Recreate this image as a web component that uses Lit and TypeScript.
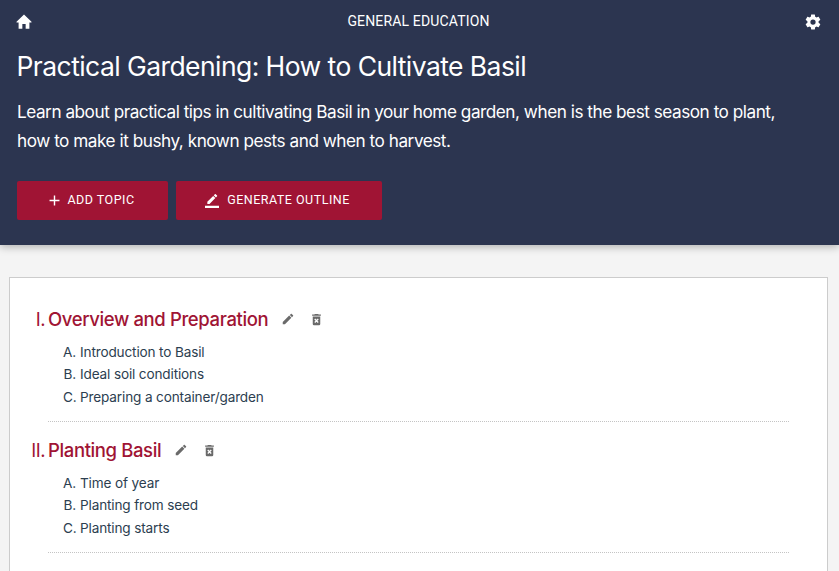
import { LitElement, html, css, svg } from "lit";
import { customElement } from "lit/decorators.js";

const ICONS = {
  home: "M2 11.8 12 2l10 9.8v.9h-2.8V21h-5v-6.2H9.8V21h-5v-8.3H2z",
  cog: "M12,15.5A3.5,3.5 0 0,1 8.5,12A3.5,3.5 0 0,1 12,8.5A3.5,3.5 0 0,1 15.5,12A3.5,3.5 0 0,1 12,15.5M19.43,12.97C19.47,12.65 19.5,12.33 19.5,12C19.5,11.67 19.47,11.34 19.43,11L21.54,9.37C21.73,9.22 21.78,8.95 21.66,8.73L19.66,5.27C19.54,5.05 19.27,4.96 19.05,5.05L16.56,6.05C16.04,5.66 15.5,5.32 14.87,5.07L14.5,2.42C14.46,2.18 14.25,2 14,2H10C9.75,2 9.54,2.18 9.5,2.42L9.13,5.07C8.5,5.32 7.96,5.66 7.44,6.05L4.95,5.05C4.73,4.96 4.46,5.05 4.34,5.27L2.34,8.73C2.21,8.95 2.27,9.22 2.46,9.37L4.57,11C4.53,11.34 4.5,11.67 4.5,12C4.5,12.33 4.53,12.65 4.57,12.97L2.46,14.63C2.27,14.78 2.21,15.05 2.34,15.27L4.34,18.73C4.46,18.95 4.73,19.03 4.95,18.95L7.44,17.94C7.96,18.34 8.5,18.68 9.13,18.93L9.5,21.58C9.54,21.82 9.75,22 10,22H14C14.25,22 14.46,21.82 14.5,21.58L14.87,18.93C15.5,18.67 16.04,18.34 16.56,17.94L19.05,18.95C19.27,19.03 19.54,18.95 19.66,18.73L21.66,15.27C21.78,15.05 21.73,14.78 21.54,14.63L19.43,12.97Z",
  plus: "M19,13H13V19H11V13H5V11H11V5H13V11H19V13Z",
  outline: "M20.71,4.04C21.1,3.65 21.1,3 20.71,2.63L18.37,0.29C18,-0.1 17.35,-0.1 16.96,0.29L15,2.25L18.75,6M17.75,7L14,3.25L4,13.25V17H7.75L17.75,7ZM0 20h24v4H0z",
  pencil: "M20.71,7.04C21.1,6.65 21.1,6 20.71,5.63L18.37,3.29C18,2.9 17.35,2.9 16.96,3.29L15.12,5.12L18.87,8.87M3,17.25V21H6.75L17.81,9.93L14.06,6.18L3,17.25Z",
  trash: "M6,19A2,2 0 0,0 8,21H16A2,2 0 0,0 18,19V7H6V19M8.46,11.88L9.87,10.47L12,12.59L14.12,10.47L15.53,11.88L13.41,14L15.53,16.12L14.12,17.53L12,15.41L9.88,17.53L8.47,16.12L10.59,14L8.46,11.88M15.5,4L14.5,3H9.5L8.5,4H5V6H19V4H15.5Z",
};

const icon = (name: keyof typeof ICONS) =>
  html`<svg class="icon ${name}" viewBox="0 0 24 24" aria-hidden="true">${svg`<path d=${ICONS[name]}></path>`}</svg>`;

const TOPICS = [
  {
    numeral: "I.",
    title: "Overview and Preparation",
    items: ["Introduction to Basil", "Ideal soil conditions", "Preparing a container/garden"],
  },
  {
    numeral: "II.",
    title: "Planting Basil",
    items: ["Time of year", "Planting from seed", "Planting starts"],
  },
];

@customElement("app-root")
export class AppRoot extends LitElement {
  static styles = css`
    :host {
      display: block;
      height: 571px;
      overflow: hidden;
      background: #f4f4f4;
      font-family: Inter, "Liberation Sans", sans-serif;
      color: #2c3e50;
    }
    * { box-sizing: border-box; }
    .icon { display: block; flex: none; fill: currentColor; overflow: visible; }
    button { border: 0; background: none; padding: 0; color: inherit; }
    header {
      height: 245px;
      padding: 0 17px;
      background: #2c3550;
      color: #fff;
      box-shadow: 0 2px 8px rgba(0, 0, 0, 0.28);
    }
    .bar { display: flex; justify-content: space-between; align-items: center; height: 43px; }
    .home, .cog { width: 18px; height: 18px; }
    .home { margin-left: -2px; }
    .category { font: 400 14px/20px Roboto, sans-serif; letter-spacing: 0.15px; margin-top: -0.5px; }
    h1 { margin: 3px 0 0 -0.5px; font-size: 26.5px; line-height: 40px; font-weight: 400; letter-spacing: -0.57px; white-space: nowrap; }
    .intro { margin: 11px 0 0; font-size: 17.2px; line-height: 29px; letter-spacing: -0.48px; white-space: nowrap; }
    .actions { display: flex; gap: 8px; margin-top: 26px; }
    .action {
      display: flex; align-items: center; justify-content: center; gap: 7px;
      width: 151px; height: 39px; border-radius: 2px; background: #a01434; color: #fff;
      font: 400 12.5px/20px Roboto, sans-serif; letter-spacing: 0.5px;
    }
    .action span { padding-bottom: 2px; }
    .wide { width: 206px; padding-right: 3px; gap: 8px; }
    .plus { width: 17px; height: 17px; margin: 0 -2.5px 0 -4.5px; }
    .outline { width: 14px; height: 14px; }
    main { margin: 32px 11px 0 9px; height: 340px; padding: 25px 38px; border: 1px solid #ccc; background: #fff; }
    .topic { height: 119px; margin-bottom: 12px; border-bottom: 1px dotted #c4c4c4; }
    .heading { display: flex; align-items: center; height: 32px; color: #a01434; font-size: 18.5px; line-height: 32px; }
    .numeral { width: 40px; margin-left: -40px; padding-right: 3px; text-align: right; flex: none; letter-spacing: -0.5px; }
    h2 { margin: 0; font: inherit; font-weight: 500; letter-spacing: -0.38px; white-space: nowrap; }
    .tool { color: #6a6a6a; margin-left: 12.5px; }
    .tool + .tool { margin-left: 14px; }
    .pencil { width: 14px; height: 14px; }
    .trash { width: 15px; height: 15px; }
    ol { margin: 6px 0 0; padding: 0; list-style: none; }
    li { display: flex; height: 22.4px; line-height: 22px; padding-left: 12px; font-size: 13.6px; letter-spacing: -0.15px; white-space: nowrap; }
    .letter { width: 17px; padding-right: 4px; text-align: right; margin-left: 3px; flex: none; }
  `;

  render() {
    return html`
      <header>
        <div class="bar">
          <button aria-label="Home">${icon("home")}</button>
          <span class="category">GENERAL EDUCATION</span>
          <button aria-label="Settings">${icon("cog")}</button>
        </div>
        <h1>Practical Gardening: How to Cultivate Basil</h1>
        <p class="intro">
          Learn about practical tips in cultivating Basil in your home garden, when is the best season to plant,<br />how to make it bushy, known pests and when to harvest.
        </p>
        <div class="actions">
          <button class="action">${icon("plus")}<span>ADD TOPIC</span></button>
          <button class="action wide">${icon("outline")}<span>GENERATE OUTLINE</span></button>
        </div>
      </header>
      <main>
        ${TOPICS.map(
          (t) => html`<section class="topic">
            <div class="heading">
              <span class="numeral">${t.numeral}</span>
              <h2>${t.title}</h2>
              <button class="tool" aria-label="Edit">${icon("pencil")}</button>
              <button class="tool" aria-label="Delete">${icon("trash")}</button>
            </div>
            <ol>
              ${t.items.map(
                (item, i) => html`<li><span class="letter">${String.fromCharCode(65 + i)}.</span><span>${item}</span></li>`,
              )}
            </ol>
          </section>`,
        )}
      </main>
    `;
  }
}
